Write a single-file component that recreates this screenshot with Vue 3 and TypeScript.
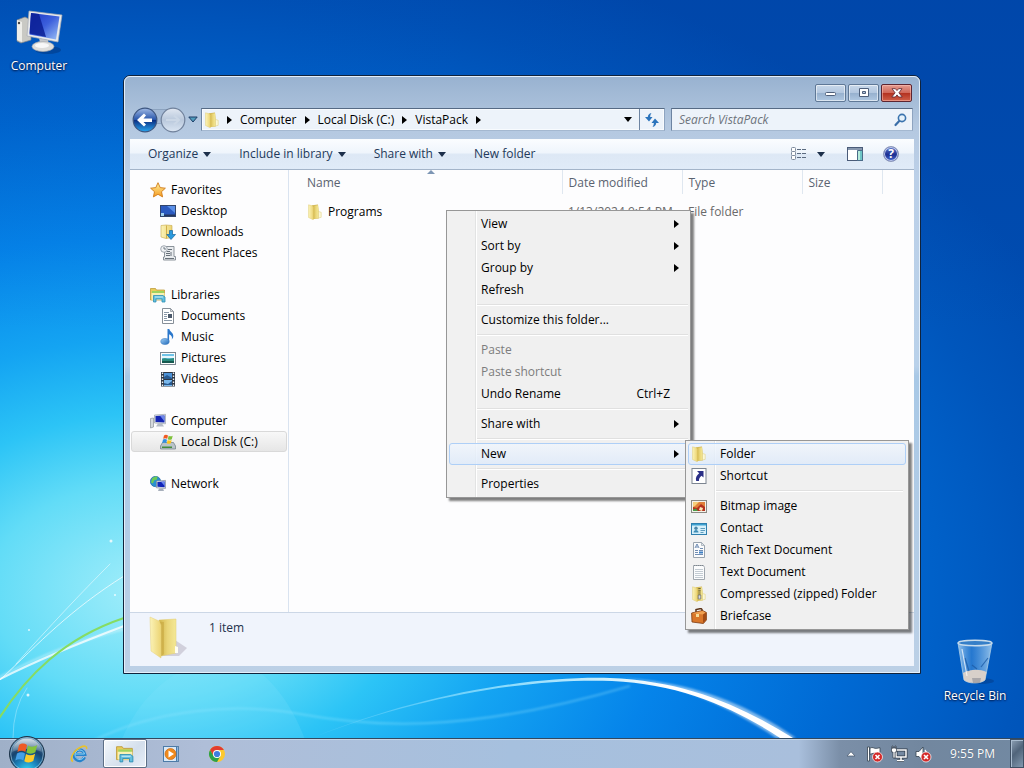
<script setup lang="ts">
interface TreeItem { label: string; icon: string; selected?: boolean }
interface TreeGroup extends TreeItem { children: TreeItem[] }
interface MenuItem { label: string; icon?: string; disabled?: boolean; arrow?: boolean; keys?: string; active?: boolean }

const folder = '<path fill="#d3b959" d="M5 1.200l6-.6.8 7.400v6.500L5 15z"/><path fill="url(#gFold2)" d="M6 2l5-.8.6 7.300v5.500L6 15.200z"/><path fill="url(#gFold)" stroke="#dcc566" stroke-width=".4" d="M1.500.8l4 1 .8 1.500v12.500l-4.800-2.300z"/><path fill="#fbf8d8" d="M11.500 7.500l2.700.8v5l-2.700.7z" stroke="#dccb74" stroke-width=".5"/>'
const library = '<path fill="#e9cc5a" stroke="#b9922c" stroke-width=".7" d="M.5 1.500h5l1 1.500h8v10h-14z"/><path fill="#9fd35e" d="M2 4h12v3H2z"/><path fill="#f9f0b4" d="M1.500 6h13v7h-13z"/><path fill="#63bfe0" stroke="#2f8fb4" stroke-width=".8" d="M3.500 8.500h9.500l2 1.500v5h-3v-3H6v3H3.500z"/><path fill="#c7ecf5" d="M5 9.500h8v1H5z"/>'

const icons: Record<string, string> = {
  folder,
  library,
  star: '<path fill="url(#gStar)" stroke="#d07a18" stroke-width=".9" stroke-linejoin="round" d="M8 .7l2.200 4.900 5.200.6-3.900 3.500 1.100 5.200L8 12.300l-4.600 2.600 1.100-5.200L.6 6.200l5.200-.6z"/>',
  desktop: '<rect x=".5" y="2.500" width="15" height="11" fill="#2c5bc0" stroke="#31456b"/><path fill="#5b90e8" d="M7 3h8v7z"/><path fill="#26375c" d="M1 11.500h14V13H1z"/><path fill="#9fd0f0" d="M1 10h3v3H1z"/>',
  downloads: '<path fill="url(#gFold)" stroke="#c7a94b" stroke-width=".6" d="M1 1.500l5-.5 6 .5v12l-6 1-5-1.500z"/><path fill="#cfae49" d="M6 1.500h1v13H6z"/><path fill="#2a9adf" stroke="#14659f" stroke-width=".7" d="M9.500 6.500h3v4h3L11 15.500 6.800 10.500h2.700z"/>',
  recent: '<path fill="#e9ecef" stroke="#7f8890" stroke-width=".9" d="M4.500 1.500H14v10h1.500v3.500H3.500v-3h1z"/><path stroke="#68717a" d="M8 4.500h4M7 6.500h3M11 7v4M6 8.500h4M6 10.500h4M5 13.500h9"/><circle cx="4" cy="4" r="3.300" fill="#f1f3f5" stroke="#8a949e" stroke-width=".8"/><path fill="none" stroke="#54606c" stroke-width=".8" d="M4 2v2h2"/>',
  document: '<path fill="#fff" stroke="#878f98" d="M2.500.5h8l3 3v12h-11z"/><path fill="#d5dade" stroke="#878f98" stroke-width=".7" d="M10.500.5v3h3z"/><path stroke="#8998a8" d="M4 4.500h5M4 6.500h3M4 8.500h3M4 10.500h3M4 12.500h8"/><path fill="#4b5a6c" d="M8 6h4v4H8z"/>',
  music: '<path fill="#2b78cc" d="M7.500 0h1.800c.5 3 4 3.500 4 7 0 1.700-.8 2.700-1.500 3.500.6-2.500 0-4-2.700-5.300V12H7.500z"/><ellipse cx="5" cy="12.500" rx="4.200" ry="3" fill="url(#gBlue)" stroke="#2b6fb8" stroke-width=".5"/>',
  picture: '<rect x=".5" y="2.500" width="15" height="12" fill="#fdfdfd" stroke="#7c8790"/><path fill="#6fc3e8" d="M2 4h12v9H2z"/><path fill="#e5f6fc" d="M2 6h12v2H2z"/><path fill="#2b8c7f" d="M2 9c3-2 5 1 12-1v5H2z"/><path fill="#16584f" d="M2 11h12v2H2z"/>',
  video: '<path fill="#2e3744" d="M1 1h14v14.500H1z"/><path fill="#4c92d8" d="M4 2h8v6H4z"/><path fill="#79b7ec" d="M4 9h8v6H4z"/><path fill="#28598f" d="M4 6l3-2 5 3v1H4zM4 12l4 1 4-3v4H4z"/><path stroke="#eef2f6" stroke-width="1.400" stroke-dasharray="1.500 1.500" d="M2.500 1.500v14M13.500 1.500v14"/>',
  computer: '<path fill="#d5d9dd" stroke="#8c939b" stroke-width=".7" d="M.5 5.500l3-.5v9l-3 1z"/><path fill="#dfe3e8" stroke="#9aa2ac" stroke-width=".7" d="M4.500 2l11-.7v9.500l-11-.8z"/><path fill="#1526b4" d="M5.500 3l9-.5v7.100l-9-.6z"/><path fill="#6c86e8" d="M10 2.800l4.500-.3v6z"/><path fill="#b5bcc6" d="M8 10.500h4l2 3H6z"/>',
  disk: '<path fill="#b9c3c9" stroke="#6d7c84" stroke-width=".7" d="M2.500 8.500h11l2 3.500v3H.5v-3z"/><path fill="#438c3c" d="M2 12.500h10v1.500H2z"/><path fill="#f05a22" d="M4 1.500c1.500-1 2.500-.8 4 0l-.8 3.300c-1.400-.8-2.600-.8-4 0z"/><path fill="#7fc13a" d="M8.700 1.800c1.500.8 2.700.6 4 0l-.9 3.400c-1.300.7-2.500.7-4 0z"/><path fill="#2f8fe0" d="M3 5.600c1.500-.8 2.500-.7 4 .1L6.200 9c-1.500-.8-2.500-.8-4 0z"/><path fill="#fbc41b" d="M7.700 6c1.500.8 2.700.7 4 0l-.9 3.300c-1.300.7-2.500.7-4 0z"/>',
  network: '<circle cx="5.500" cy="5.500" r="5.200" fill="#2a8fd0" stroke="#1c5e9a" stroke-width=".6"/><path fill="#6ccb57" d="M2 2.500c2-2 4-2.300 5.500-2L7 3.500 4 4.500 3 7.500 1 6.500z"/><path fill="#e6eaf0" stroke="#808a98" stroke-width=".7" d="M6.500 5l9-.6v8l-9-.6z"/><path fill="#1226b8" d="M7.400 6l7.300-.5v5.800l-7.300-.5z"/><path fill="#6d8aee" d="M11 5.700l3.700-.2v4.500z"/><path fill="#a8b0bc" d="M9 12.500h4l1 2.500H8z"/>',
  shortcut: '<rect x="1" y=".5" width="14" height="15" fill="#fff" stroke="#7c8591"/><path fill="#2a2f86" d="M6 3h6.500v6.500L10.500 7.700C8.600 9.500 7.700 11 8 13H5.200C4.200 10 5.500 7.200 8.200 5.200z"/>',
  bitmap: '<rect x=".5" y="2.500" width="15" height="12" fill="#f5f2ea" stroke="#8b8a84"/><path fill="#e0803a" d="M2 4h12v9H2z"/><path fill="#b5301c" d="M2 9l4 1 4-4 4 3v4H2z"/><path fill="#f6cf7a" d="M2 4h6L4 8l-2 1z"/><path fill="#4b9c48" d="M2 11.500l3-1 2 2.500H2z"/><path fill="#fbe6b4" d="M9 9l3 1-1 3-3-1z"/>',
  contact: '<rect x=".5" y="3.500" width="15" height="11" fill="#d5effa" stroke="#2f7fae"/><path fill="#3da0d0" d="M1 4h14v1.500H1z"/><circle cx="5" cy="8.300" r="1.700" fill="#4b86a8"/><path fill="#3f8db5" d="M2.500 12.500c0-3.500 5-3.500 5 0z"/><path stroke="#3f86ad" stroke-width=".8" d="M9.500 8.500h4.500M9.500 10.500h4.500M9.500 12.500h3"/>',
  rich: '<path fill="#fbfcfd" stroke="#9aa4ae" d="M2.500.5h8l3 3v12h-11z"/><path fill="#dfe5ea" stroke="#9aa4ae" stroke-width=".7" d="M10.500.5v3h3z"/><path fill="none" stroke="#4c70a0" stroke-width=".8" d="M4 6l2-4 2 4M5 5h2M9 6.500h3M4 8.500h3M8 8.500h4M4 10.500h3M4 12.500h8"/><path fill="#3c7fc4" d="M8 9.500h4v2H8z"/>',
  text: '<path fill="#fbfcfd" stroke="#a0a7ae" d="M2.500 1.500h10l1 2v12h-11z"/><path stroke="#c3cbd2" d="M4 5.500h8M4 7.500h8M4 9.500h8M4 11.500h8M4 13.500h8"/><path stroke="#7e868e" stroke-dasharray="1 1" d="M3 1.500h9"/>',
  zip: folder + '<path stroke="#6f6434" stroke-width="2.400" stroke-dasharray="1.200 1" d="M8.500 2v10"/><path fill="#d7dade" stroke="#6b6b6b" stroke-width=".7" d="M7.200 9h2.600v4H7.200z"/>',
  briefcase: '<path fill="none" stroke="#5b3216" stroke-width="1.500" d="M5 4V1.500l5-1 1 1v2"/><path fill="#d9772a" stroke="#7c3a10" stroke-width=".8" d="M.6 5l11-2.500 3.800 2V12l-3 3.500L1 14z"/><path fill="#f0a050" d="M1 5.200l10.500-2.300 3 1.500L12 6.500z"/><path fill="#a34c15" d="M12 6.500l3.200-2V12L12 15z"/><path fill="#f6dc9a" d="M5 6h3v3H5z"/>',
}

const tree: TreeGroup[] = [
  { label: 'Favorites', icon: 'star', children: [
    { label: 'Desktop', icon: 'desktop' },
    { label: 'Downloads', icon: 'downloads' },
    { label: 'Recent Places', icon: 'recent' },
  ] },
  { label: 'Libraries', icon: 'library', children: [
    { label: 'Documents', icon: 'document' },
    { label: 'Music', icon: 'music' },
    { label: 'Pictures', icon: 'picture' },
    { label: 'Videos', icon: 'video' },
  ] },
  { label: 'Computer', icon: 'computer', children: [
    { label: 'Local Disk (C:)', icon: 'disk', selected: true },
  ] },
  { label: 'Network', icon: 'network', children: [] },
]

const crumbs = ['Computer', 'Local Disk (C:)', 'VistaPack']

const commands = [
  { label: 'Organize', drop: true },
  { label: 'Include in library', drop: true },
  { label: 'Share with', drop: true },
  { label: 'New folder', drop: false },
]

const menu: MenuItem[][] = [
  [
    { label: 'View', arrow: true },
    { label: 'Sort by', arrow: true },
    { label: 'Group by', arrow: true },
    { label: 'Refresh' },
  ],
  [{ label: 'Customize this folder...' }],
  [
    { label: 'Paste', disabled: true },
    { label: 'Paste shortcut', disabled: true },
    { label: 'Undo Rename', keys: 'Ctrl+Z' },
  ],
  [{ label: 'Share with', arrow: true }],
  [{ label: 'New', arrow: true, active: true }],
  [{ label: 'Properties' }],
]

const submenu: MenuItem[][] = [
  [
    { label: 'Folder', icon: 'folder', active: true },
    { label: 'Shortcut', icon: 'shortcut' },
  ],
  [
    { label: 'Bitmap image', icon: 'bitmap' },
    { label: 'Contact', icon: 'contact' },
    { label: 'Rich Text Document', icon: 'rich' },
    { label: 'Text Document', icon: 'text' },
    { label: 'Compressed (zipped) Folder', icon: 'zip' },
    { label: 'Briefcase', icon: 'briefcase' },
  ],
]
</script>

<template>
  <div class="screen">
    <svg class="defs" width="0" height="0" aria-hidden="true">
      <defs>
        <linearGradient id="gFold" x1="0" x2="1" y1="0" y2="0"><stop offset="0" stop-color="#fbf3b8" /><stop offset="1" stop-color="#ecd473" /></linearGradient>
        <linearGradient id="gFold2" x1="0" x2="1" y1="0" y2="0"><stop offset="0" stop-color="#d0b348" /><stop offset=".5" stop-color="#ead679" /><stop offset="1" stop-color="#f4e896" /></linearGradient>
        <linearGradient id="gStar" x1="0" x2="0" y1="0" y2="1"><stop offset="0" stop-color="#fff3a0" /><stop offset="1" stop-color="#f59a20" /></linearGradient>
        <linearGradient id="gBlue" x1="0" x2="1" y1="0" y2="1"><stop offset="0" stop-color="#9fd0f8" /><stop offset="1" stop-color="#1f68b8" /></linearGradient>
      </defs>
    </svg>

    <main class="desktop">
      <svg class="wallpaper" viewBox="0 0 1024 768" preserveAspectRatio="xMidYMid slice" aria-hidden="true">
        <defs>
          <linearGradient id="arc" x1="312" x2="790" y1="0" y2="0" gradientUnits="userSpaceOnUse">
            <stop offset="0" stop-color="#7fd8ff" stop-opacity=".2" /><stop offset=".4" stop-color="#a8eaff" stop-opacity=".8" /><stop offset=".75" stop-color="#fff" />
          </linearGradient>
          <filter id="soft"><feGaussianBlur stdDeviation="1" /></filter>
        </defs>
        <path fill="#8fe6ff" opacity=".16" d="M112 768C130 700 170 670 210 660s84 30 104 108z" />
        <path fill="none" stroke="#9be9ff" stroke-width="2" opacity=".35" d="M95 740c60-30 140-38 205-26s160 22 330-28" filter="url(#soft)" />
        <path fill="url(#arc)" d="M312 738C420 694 530 676 610 678c75 3 130 27 183 60h-13c-45-30-100-54-168-57-80-3-190 14-300 57z" />
        <path fill="#fff" opacity=".5" d="M620 678c76 4 128 27 176 60h-20c-48-32-96-54-156-60z" filter="url(#soft)" />
        <g fill="none" stroke-linecap="round">
          <path stroke="#fff" stroke-width="2" opacity=".75" d="M0 679Q50 654 124 626" />
          <path stroke="#fff" stroke-width="2" opacity=".4" d="M0 677q60-32 124-48" filter="url(#soft)" />
          <path stroke="#fff" opacity=".7" d="M0 680C40 642 70 610 124 576" />
          <path stroke="#fff" opacity=".5" d="M16 664C50 626 80 594 110 564" />
          <path stroke="#86dc62" stroke-width="2" d="M-2 720C26 676 64 638 124 618" />
          <path stroke="#fff" opacity=".3" d="M13 738q0-30 14-50" />
        </g>
        <g fill="#fff" opacity=".8"><circle cx="111" cy="541" r="1.500" /><circle cx="29" cy="630" r="1" /><circle cx="28" cy="695" r="1.500" /><circle cx="115" cy="595" r="1" /></g>
      </svg>

      <a class="shortcut computer" href="#">
        <svg width="48" height="48" viewBox="0 0 48 48" aria-hidden="true">
          <defs><linearGradient id="scr" x1="0" x2="1" y1="0" y2="1"><stop offset="0" stop-color="#1a35c4" /><stop offset=".5" stop-color="#3c5fdc" /><stop offset="1" stop-color="#9cc0f6" /></linearGradient></defs>
          <ellipse cx="33" cy="42" rx="13" ry="4" fill="#022c6c" opacity=".4" />
          <path fill="#c9c9c4" stroke="#83858a" stroke-width=".7" d="M2 12l8-3 6 3v20L6 35l-4-2z" />
          <path fill="#eeeeea" d="M2 12l5 2v20l-5-2z" />
          <circle cx="4" cy="15" r="1.200" fill="#444" />
          <path fill="#c4c8cc" d="M24 30l9 2 1 7h-8z" />
          <ellipse cx="28" cy="38.500" rx="11" ry="5" fill="#dededc" stroke="#a8abb0" stroke-width=".7" />
          <ellipse cx="27" cy="37.500" rx="7" ry="2.500" fill="#f8f8f8" />
          <path fill="#e8eaec" stroke="#a6abb3" stroke-width=".7" d="M14 3l33 4-4 27-31-6z" />
          <path fill="url(#scr)" d="M16 5l28.500 3.500-3.500 23-26.500-5z" />
          <path fill="#0a1e94" d="M16 5l8 1 7 23-16.500-3.500z" opacity=".85" />
        </svg>
        <span>Computer</span>
      </a>

      <a class="shortcut recycle" href="#">
        <svg width="48" height="48" viewBox="0 0 48 48" aria-hidden="true">
          <defs><linearGradient id="bin" x1="0" x2="1" y1="0" y2="0"><stop offset="0" stop-color="#b9dcf6" stop-opacity=".8" /><stop offset=".4" stop-color="#4b94dc" stop-opacity=".5" /><stop offset="1" stop-color="#b6daf4" stop-opacity=".8" /></linearGradient></defs>
          <ellipse cx="30" cy="43" rx="13" ry="3" fill="#023a86" opacity=".5" />
          <path fill="url(#bin)" stroke="#a9cbe6" stroke-width=".8" d="M7 5l6 37c4 4 17 4 21 0l7-37z" />
          <path fill="#d8d0ca" d="M12 35c7-4 17-4 23.500-1L34 42c-4 4-17 4-21 0z" />
          <path fill="#8c8c92" opacity=".6" d="M21 40h9l-1 5h-7z" />
          <path fill="none" stroke="#1d5ca8" stroke-width="1.200" d="M37 20l-7 9M14 20l4 13M21 27l5 4" opacity=".8" />
          <ellipse cx="24" cy="5" rx="17" ry="2.800" fill="#367fc8" stroke="#c8dcec" stroke-width="1.400" />
          <path fill="none" stroke="#fff" stroke-width="1.200" opacity=".7" d="M11 11l5 27" />
        </svg>
        <span>Recycle Bin</span>
      </a>

      <section class="window" aria-label="VistaPack">
        <div class="glass">
          <header class="titlebar">
            <button type="button" aria-label="Minimize"><svg width="14" height="10" viewBox="0 0 14 10"><rect x="1.500" y="4.500" width="10" height="3" rx="1" fill="#fff" stroke="#4e5f7a" /></svg></button>
            <button type="button" aria-label="Maximize"><svg width="14" height="10" viewBox="0 0 14 10"><path fill="#fff" fill-rule="evenodd" stroke="#4e5f7a" d="M2.500.5h9v8h-9zM5.500 3.500v2h3v-2z" /></svg></button>
            <button type="button" class="close" aria-label="Close"><svg width="14" height="10" viewBox="0 0 14 10"><path fill="#fff" stroke="#5c2430" stroke-width=".8" d="M2 .7h3.400L7 2.600 8.600.7H12L8.900 4.800 12.200 9H8.700L7 6.900 5.300 9H1.800L5.100 4.800z" /></svg></button>
          </header>

          <div class="navbar">
            <div class="travel">
              <svg width="56" height="28" viewBox="0 0 56 28" aria-hidden="true"><path fill="#9fb4d0" stroke="#7890ae" d="M13 2.500h30v14H13z" opacity=".6" /></svg>
              <button type="button" aria-label="Back">
                <svg width="26" height="26" viewBox="0 0 26 26">
                  <defs>
                    <linearGradient id="back" x1="0" x2="0" y1="0" y2="1"><stop offset="0" stop-color="#9fb9e4" /><stop offset=".48" stop-color="#2a57ac" /><stop offset=".5" stop-color="#0a2c80" /><stop offset="1" stop-color="#28a6f0" /></linearGradient>
                  </defs>
                  <circle cx="13" cy="13" r="11.800" fill="url(#back)" stroke="#3d5681" stroke-width="1.200" />
                  <path fill="#fff" d="M5 13l7-6.500 2 2L11.500 11.500H20v3.500h-8.500L14 17.500l-2 2z" />
                </svg>
              </button>
              <button type="button" aria-label="Forward" disabled>
                <svg width="26" height="26" viewBox="0 0 26 26">
                  <defs>
                    <linearGradient id="fwd" x1="0" x2="0" y1="0" y2="1"><stop offset="0" stop-color="#e1e8f2" /><stop offset=".5" stop-color="#b9c8dc" /><stop offset="1" stop-color="#dbe6f3" /></linearGradient>
                  </defs>
                  <circle cx="13" cy="13" r="11.800" fill="url(#fwd)" stroke="#70819b" stroke-width="1.200" />
                  <path fill="none" stroke="#cbd7e6" stroke-width="2" d="M6 13h12M14 8.500l5 4.500-5 4.500" />
                </svg>
              </button>
              <button type="button" class="history" aria-label="Recent pages"><svg width="10" height="7" viewBox="0 0 10 7"><path fill="#4f9cbc" stroke="#1d3d66" d="M.8 1h8.400L5 6z" /></svg></button>
            </div>

            <nav class="address" aria-label="Address">
              <svg class="ico" width="16" height="16" viewBox="0 0 16 16" aria-hidden="true" v-html="icons.folder"></svg>
              <i class="tri first"></i>
              <template v-for="c in crumbs" :key="c">
                <a href="#">{{ c }}</a><i class="tri"></i>
              </template>
              <button type="button" class="prev" aria-label="Previous locations"><i class="down"></i></button>
              <button type="button" class="refresh" aria-label="Refresh">
                <svg width="16" height="16" viewBox="0 0 16 16"><path fill="#2b74bc" d="M7.500 1C5 1.500 4 3 3.800 5H1l4 4.500L8.500 5H6.200c0-1.500.3-2.500 1.300-4z" /><path fill="#2b74bc" d="M8.500 15c2.500-.5 3.500-2 3.700-4H15l-4-4.500L7.500 11h2.300c0 1.500-.3 2.500-1.300 4z" /></svg>
              </button>
            </nav>

            <form class="search" @submit.prevent>
              <input type="text" placeholder="Search VistaPack" aria-label="Search VistaPack">
              <svg width="14" height="14" viewBox="0 0 14 14" aria-hidden="true"><circle cx="9" cy="5" r="3.600" fill="#e6f2fb" stroke="#3b74ae" stroke-width="1.600" /><path stroke="#3b6ea8" stroke-width="2.200" stroke-linecap="round" d="M6 8.200L2.500 12" /></svg>
            </form>
          </div>

          <div class="client">
            <div class="commands" role="toolbar" aria-label="Commands">
              <button v-for="c in commands" :key="c.label" type="button">{{ c.label }}<i v-if="c.drop" class="down"></i></button>
              <span class="spacer"></span>
              <button type="button" class="views" aria-label="Change your view">
                <svg width="16" height="14" viewBox="0 0 16 14"><g fill="#fff" stroke="#7b889a"><rect x=".5" y=".5" width="4" height="4" rx="1" /><rect x=".5" y="4.500" width="4" height="4" rx="1" /><rect x=".5" y="8.500" width="4" height="4" rx="1" /></g><path stroke="#5b6b80" stroke-dasharray="4 1" d="M6 2.500h10M6 6.500h10M6 10.500h10" /></svg>
                <i class="down"></i>
              </button>
              <button type="button" aria-label="Show the preview pane">
                <svg width="16" height="14" viewBox="0 0 16 14"><rect x=".5" y=".5" width="15" height="13" fill="#fff" stroke="#4a5b78" /><path fill="#8797ae" d="M1 1h14v2H1z" /><path fill="#6ec6c6" stroke="#4a6b88" d="M10.500 3.500h5v10h-5z" /><path fill="#b5ecdc" d="M11 4h2v9h-2z" /></svg>
              </button>
              <button type="button" class="help" aria-label="Get help">?</button>
            </div>

            <div class="body">
              <nav class="tree" aria-label="Navigation pane">
                <ul v-for="g in tree" :key="g.label">
                  <li>
                    <a href="#"><svg class="ico" width="16" height="16" viewBox="0 0 16 16" aria-hidden="true" v-html="icons[g.icon]"></svg>{{ g.label }}</a>
                  </li>
                  <li v-for="t in g.children" :key="t.label" class="child">
                    <a href="#" :class="{ selected: t.selected }"><svg class="ico" width="16" height="16" viewBox="0 0 16 16" aria-hidden="true" v-html="icons[t.icon]"></svg>{{ t.label }}</a>
                  </li>
                </ul>
              </nav>

              <div class="list">
                <table>
                  <thead>
                    <tr><th class="c-name">Name<i class="sort"></i></th><th class="c-date">Date modified</th><th class="c-type">Type</th><th class="c-size">Size</th><th class="c-rest" aria-label="Empty"></th></tr>
                  </thead>
                  <tbody>
                    <tr>
                      <td><span class="file"><svg class="ico" width="16" height="16" viewBox="0 0 16 16" aria-hidden="true" v-html="icons.folder"></svg>Programs</span></td>
                      <td>1/13/2024 9:54 PM</td><td>File folder</td><td></td><td></td>
                    </tr>
                  </tbody>
                </table>
              </div>
            </div>

            <footer class="details">
              <svg width="40" height="44" viewBox="0 0 40 44" aria-hidden="true">
                <path fill="#8a7d92" opacity=".3" d="M26 24l12 8-8 8H12z" />
                <path fill="url(#gFold2)" stroke="#e3cd70" stroke-width=".5" d="M10 4l17-1v34l-15 3z" />
                <path fill="#fffef2" d="M26 30l3 1v6h-3z" />
                <path fill="#c3a23a" opacity=".5" d="M11 6h4v32l-4 3z" />
                <path fill="url(#gFold)" stroke="#e6d17c" stroke-width=".5" d="M1 1l9 4 2 4v33L2 35z" />
              </svg>
              <span>1 item</span>
            </footer>
          </div>
        </div>
      </section>

      <div class="menu main-menu" role="menu">
        <div v-for="(grp, gi) in menu" :key="gi" class="menu-group">
          <button v-for="m in grp" :key="m.label" type="button" role="menuitem" :disabled="m.disabled" :class="{ active: m.active }">
            <span class="slot"></span><span class="text">{{ m.label }}</span><kbd v-if="m.keys">{{ m.keys }}</kbd><i v-if="m.arrow" class="tri"></i>
          </button>
        </div>
      </div>
      <div class="menu sub-menu" role="menu" aria-label="New">
        <div v-for="(grp, gi) in submenu" :key="gi" class="menu-group">
          <button v-for="m in grp" :key="m.label" type="button" role="menuitem" :class="{ active: m.active }">
            <span class="slot"><svg class="ico" width="16" height="16" viewBox="0 0 16 16" aria-hidden="true" v-html="icons[m.icon ?? '']"></svg></span><span class="text">{{ m.label }}</span>
          </button>
        </div>
      </div>
    </main>

    <footer class="taskbar">
      <button type="button" class="start" aria-label="Start">
        <svg width="38" height="38" viewBox="0 0 38 38">
          <defs>
            <radialGradient id="orb" cx=".5" cy="1" r=".95"><stop offset="0" stop-color="#35e0fa" /><stop offset=".35" stop-color="#1b84bc" /><stop offset=".65" stop-color="#17436e" /><stop offset="1" stop-color="#5f86a8" /></radialGradient>
            <linearGradient id="shine" x1="0" x2="0" y1="0" y2="1"><stop offset="0" stop-color="#fff" stop-opacity=".75" /><stop offset="1" stop-color="#fff" stop-opacity=".15" /></linearGradient>
          </defs>
          <circle cx="19" cy="19" r="17.500" fill="url(#orb)" stroke="#1c3348" stroke-width="1" />
          <circle cx="19" cy="19" r="16.300" fill="none" stroke="#b8dcee" stroke-width=".8" opacity=".7" />
          <path fill="url(#shine)" d="M4 17C5 8 12 3.500 19 3.500S33 8 34 17c-8-4-22-4-30 0z" />
          <path fill="#ee5a24" d="M11 10c3-2 5.500-1.800 8 0l-1.600 7c-2.600-1.500-5-1.600-8 0z" />
          <path fill="#84c43c" d="M20 10.500c3 1.800 6 1.600 9.200-.4l-1.800 7.200c-3 1.900-6 1.900-9 .2z" />
          <path fill="#46a0e8" d="M9 18.500c3-1.700 5.500-1.500 8-.1l-1.700 7c-2.600-1.500-5-1.600-8 0z" />
          <path fill="#fccb2a" d="M18 19c3 1.800 6 1.600 9.100-.3L25.300 26c-3 1.900-6 1.900-9 .2z" />
        </svg>
      </button>

      <div class="apps">
        <button type="button" aria-label="Internet Explorer">
          <svg width="18" height="18" viewBox="0 0 18 18"><path fill="none" stroke="#2583cc" stroke-width="3.200" d="M14.500 12.200A5.300 5.300 0 1 1 14.800 9.500H5" /><path fill="none" stroke="#8fd4f6" stroke-width="1" d="M14 12a4.800 4.800 0 1 1 .5-3H5.500" /><path fill="none" stroke="#e9c22c" stroke-width="1.600" d="M3 16.500C-1 15 3 6 10 2.500c4-2 7.500-2 6.500 1.500" /></svg>
        </button>
        <button type="button" class="running" aria-label="Windows Explorer">
          <svg width="18" height="18" viewBox="0 0 16 16" v-html="icons.library"></svg>
        </button>
        <button type="button" aria-label="Windows Media Player">
          <svg width="18" height="18" viewBox="0 0 18 18"><rect x="3.500" y="1.500" width="13" height="15" fill="#8fb6dc" stroke="#5880a8" /><rect x="1.500" y="1.500" width="13" height="15" fill="#dbe9f6" stroke="#4c7ba8" /><circle cx="8.500" cy="9" r="5.500" fill="#f08a1c" stroke="#cc6a10" stroke-width=".7" /><path fill="#fff" d="M6.500 5.500L12 9l-5.500 3.500z" /></svg>
        </button>
        <button type="button" aria-label="Google Chrome">
          <svg width="18" height="18" viewBox="0 0 18 18"><circle cx="9" cy="9" r="8" fill="#fcc92e" /><path fill="#e23c30" d="M2.070 5A8 8 0 0 1 15.930 5H9L5.540 11z" /><path fill="#2ba14b" d="M2.070 5A8 8 0 0 0 9 17l3.460-6H5.540z" /><circle cx="9" cy="9" r="4" fill="#fff" /><circle cx="9" cy="9" r="3.100" fill="#3f7de0" /></svg>
        </button>
      </div>

      <div class="tray">
        <button type="button" aria-label="Show hidden icons"><svg width="10" height="6" viewBox="0 0 10 6"><path fill="#fff" stroke="#46566b" stroke-width=".7" d="M5 .7L9 5H1z" /></svg></button>
        <button type="button" aria-label="Action Center"><svg width="18" height="18" viewBox="0 0 18 18"><path fill="#fff" stroke="#33414f" stroke-width=".8" d="M1.500 2h2v14h-2zM4 3c3-1.500 4 1 7 .3l3-.6v6.300c-3 1-4-1.500-7-.6l-3 .9z" /><circle cx="11.500" cy="12" r="5" fill="#d42a2a" stroke="#fff" stroke-width=".7" /><path stroke="#fff" stroke-width="1.600" d="M9.500 10l4 4M13.500 10l-4 4" /></svg></button>
        <button type="button" aria-label="Network"><svg width="18" height="18" viewBox="0 0 18 18"><path fill="none" stroke="#2e3b49" stroke-width="3" d="M6 5h10v7H6zM11 12v3M7 15.500h7" /><path fill="none" stroke="#fff" stroke-width="1.500" d="M6 5h10v7H6zM11 12v3M7 15.500h7" /><path fill="#fff" stroke="#2e3b49" stroke-width=".7" d="M1.500 3h5v4h-1.500v6h-2V7H1.500zM2 1h1v2H2zM5 1h1v2H5z" /></svg></button>
        <button type="button" aria-label="Volume"><svg width="18" height="18" viewBox="0 0 18 18"><path fill="#fff" stroke="#33414f" stroke-width=".8" d="M2 6.500h3L9 2v14l-4-4.500H2z" /><path fill="none" stroke="#fff" stroke-width="1.200" d="M11 5q2 2 1 4" /><circle cx="12" cy="12" r="5" fill="#d42a2a" stroke="#fff" stroke-width=".7" /><path stroke="#fff" stroke-width="1.600" d="M10 10l4 4M14 10l-4 4" /></svg></button>
        <time>9:55 PM</time>
        <button type="button" class="peek" aria-label="Show desktop"></button>
      </div>
    </footer>
  </div>
</template>

<style>
body { margin: 0; overflow: hidden; }
</style>

<style scoped>
.screen {
  display: flex;
  flex-direction: column;
  height: 100vh;
  font-family: "Open Sans", "Noto Sans", sans-serif;
  font-size: 12px;
  line-height: 16px;
  color: #000;
}
.screen * { box-sizing: border-box; }
.defs { position: absolute; }
button {
  font: inherit;
  color: inherit;
  background: none;
  border: 0;
  padding: 0;
  display: inline-flex;
  align-items: center;
  justify-content: center;
}
a { color: inherit; text-decoration: none; }
svg { flex: none; display: block; }
ul { list-style: none; margin: 0; padding: 0; }

.desktop {
  position: relative;
  flex: 1;
  background:
    linear-gradient(180deg, rgba(0, 44, 140, .16), rgba(0, 60, 160, 0) 45%),
    radial-gradient(1000px 680px at 150px 590px, #a4eefa 0, #62dcf7 16%, #2cc4f6 26%, #14a4f2 37%, #0584ea 52%, #006ad4 70%, #0056bc 88%, #004cb0 100%);
}
.wallpaper { position: absolute; left: 0; top: 0; width: 100%; height: 100vh; }

.shortcut {
  position: absolute;
  display: flex;
  flex-direction: column;
  align-items: center;
  width: 76px;
  color: #fff;
  text-shadow: 0 1px 2px #001c50, 0 0 2px #001c50;
}
.computer { left: 1px; top: 8px; gap: 2px; }
.recycle { right: 11px; bottom: 34px; gap: 2px; }

.window {
  position: absolute;
  left: 123px;
  right: 103px;
  top: 75px;
  bottom: 64px;
  border: 1px solid #10233c;
  border-radius: 7px 7px 0 0;
  background: linear-gradient(180deg, #98b2d0 0, #b4c8e0 50px, #bcd0e8 100px, #b9d1ea 290px, #a8c8e6 300px, #bcd0e6 100%);
}
.glass {
  height: 100%;
  display: flex;
  flex-direction: column;
  border: 1px solid #e4effa;
  border-radius: 6px 6px 0 0;
  padding: 0 5px 6px;
}
.titlebar { display: flex; justify-content: flex-end; gap: 2px; padding: 7px 2px 0; height: 29px; }
.titlebar button {
  width: 31px;
  height: 18px;
  border: 1px solid #5f7896;
  border-radius: 2px;
  box-shadow: inset 0 0 0 1px rgba(255, 255, 255, .55);
  background: linear-gradient(180deg, #c8d8ea 0, #b3c7df 48%, #96b0ce 50%, #b0c8e2 100%);
}
.titlebar .close {
  border-color: #5c2430;
  box-shadow: inset 0 0 0 1px rgba(255, 200, 190, .5);
  background: linear-gradient(180deg, #e49c90 0, #d0685a 48%, #b2301f 50%, #d0604a 100%);
}

.navbar { display: flex; align-items: center; padding: 0 1px 6px 2px; height: 33px; }
.travel { position: relative; display: flex; align-items: center; width: 69px; gap: 2px; }
.travel > svg { position: absolute; left: 0; top: 0; }
.travel button { position: relative; }
.address, .search {
  display: flex;
  align-items: center;
  height: 23px;
  border: 1px solid #6d84a2;
  border-color: #566a84 #8ea4c0 #a4b8d0 #6d84a2;
  background: #edf3fa;
}
.address { flex: 1; padding-left: 2px; box-shadow: inset 0 0 0 1px #f8fbfe; }
.tri { width: 0; height: 0; border: 4px solid transparent; border-left: 5px solid #000; border-right: 0; flex: none; }
.down { width: 0; height: 0; border: 4px solid transparent; border-top: 5px solid #1c2f4a; border-bottom: 0; flex: none; }
.address .first { margin-left: 7px; }
.address a { margin: 0 8px; white-space: nowrap; }
.prev { margin-left: auto; width: 22px; height: 21px; }
.prev .down { border-top-color: #000; }
.refresh { width: 25px; height: 21px; border-left: 1px solid #6d84a2; }
.search { width: 242px; margin-left: 6px; padding: 0 5px 0 7px; }
.search input {
  flex: 1;
  min-width: 0;
  border: 0;
  padding: 0;
  outline: 0;
  background: none;
  font: inherit;
}
.search input::placeholder { color: #6d747c; font-style: italic; opacity: 1; }

.client { flex: 1; min-height: 0; display: flex; flex-direction: column; background: #fdfdfe; }
.commands {
  display: flex;
  align-items: center;
  gap: 28px;
  height: 31px;
  padding: 0 15px 0 18px;
  color: #23395a;
  border-bottom: 1px solid #a3b4c9;
  background: linear-gradient(180deg, #fbfdff 0, #eff5fc 45%, #dde8f5 52%, #e0ebf8 100%);
}
.commands button { gap: 5px; white-space: nowrap; }
.commands .spacer { flex: 1; }
.commands .views { gap: 10px; margin-right: -6px; }
.commands .help {
  width: 16px;
  height: 16px;
  margin-left: -8px;
  border-radius: 50%;
  border: 1px solid #8a95b8;
  box-shadow: inset 0 0 0 1px #c3cdec;
  color: #fff;
  font-weight: bold;
  background: linear-gradient(180deg, #5a74c8 0, #1c2f92 55%, #4668d0 100%);
}

.body { flex: 1; min-height: 0; display: flex; }
.tree { width: 159px; flex: none; padding: 9px 1px 0; border-right: 1px solid #d9e3f0; }
.tree ul { margin-bottom: 21px; }
.tree a {
  display: flex;
  align-items: center;
  gap: 5px;
  height: 21px;
  padding-left: 18px;
  border: 1px solid transparent;
  white-space: nowrap;
}
.tree .child a { padding-left: 28px; }
.tree .selected { border-color: #d9d9d9; border-radius: 3px; background: linear-gradient(180deg, #f8f8f8, #e6e6e6); }

.list { flex: 1; min-width: 0; overflow: hidden; }
table { width: 100%; border-collapse: collapse; table-layout: fixed; color: #6a6a6a; }
th { position: relative; height: 24px; padding: 2px 0 0 6px; text-align: left; font-weight: normal; color: #5a6370; border-right: 1px solid #dfe7f0; }
th:last-child { border-right: 0; }
td { padding: 7px 0 0 6px; height: 28px; white-space: nowrap; }
th:first-child { padding-left: 18px; }
td:first-child { padding-left: 18px; color: #000; }
.c-name { width: 273px; }
.c-date, .c-type { width: 120px; }
.c-size { width: 80px; }
.sort { position: absolute; left: 50%; top: 0; margin-left: 2px; border: 4px solid transparent; border-top: 0; border-bottom: 4px solid #7d96b4; }
.file { display: flex; align-items: center; gap: 5px; }

.details {
  display: flex;
  height: 54px;
  padding: 3px 19px 0;
  gap: 20px;
  color: #23324c;
  border-top: 1px solid #ccd7e6;
  background: #f0f4fc;
}
.details span { padding-top: 4px; }

.menu {
  position: absolute;
  padding: 2px;
  border: 1px solid #979797;
  background: linear-gradient(90deg, #f1f1f1 28px, #e2e3e3 28px, #e2e3e3 29px, #fff 29px, #fff 30px, #f0f0f0 30px);
  box-shadow: 3px 3px 2px rgba(0, 0, 0, .5);
}
.main-menu { left: 446px; top: 210px; width: 245px; }
.sub-menu { left: 685px; top: 440px; width: 224px; }
.menu-group + .menu-group { margin-top: 8px; position: relative; }
.menu-group + .menu-group::before {
  content: "";
  position: absolute;
  left: 28px;
  right: 0;
  top: -5px;
  border-top: 1px solid #e0e0e0;
  border-bottom: 1px solid #fff;
}
.sub-menu .menu-group + .menu-group::before { right: 3px; }
.menu button {
  display: flex;
  width: 100%;
  height: 22px;
  padding-right: 8px;
  border: 1px solid transparent;
  border-radius: 3px;
  justify-content: flex-start;
  white-space: nowrap;
}
.menu button:disabled { color: #7d7d7d; }
.menu .active { border-color: #aecff7; background: linear-gradient(180deg, rgba(240, 246, 253, .8), rgba(222, 234, 250, .8)); }
.slot { width: 31px; padding-left: 2px; }
.text { flex: 1; text-align: left; }
kbd { font: inherit; margin-right: 9px; }

.taskbar {
  position: relative;
  display: flex;
  height: 30px;
  border-top: 1px solid #32485f;
  box-shadow: inset 0 1px 0 #c6d6e8;
  background: linear-gradient(90deg, #9fb0c8 0, #afbed8 20%, #a6c0de 50%, #a9bfdc 78%, #7b8fa8 82%, #72879f 90%, #7289a2 100%);
}
.start { position: relative; width: 57px; padding-right: 3px; }
.start svg { margin: -5px 0; }
.apps { display: flex; gap: 2px; }
.apps button { width: 44px; height: 29px; }
.apps .running {
  border: 1px solid #5d6f86;
  border-radius: 2px;
  box-shadow: inset 0 0 0 1px #fff;
  background: linear-gradient(135deg, #f4f8fc, #d4dfec 60%, #e8eff8);
}
.tray { display: flex; align-items: center; margin-left: auto; color: #fff; }
.tray button { width: 24px; height: 29px; }
.tray time { width: 73px; text-align: center; margin: 0 1px; text-shadow: 0 0 1px #405468; }
.tray .peek {
  width: 14px;
  border: 1px solid #3f5064;
  box-shadow: inset 1px 1px 0 #a9bccf;
  background: linear-gradient(135deg, #8fa2b6, #50647a 45%, #8298ae);
}
</style>
